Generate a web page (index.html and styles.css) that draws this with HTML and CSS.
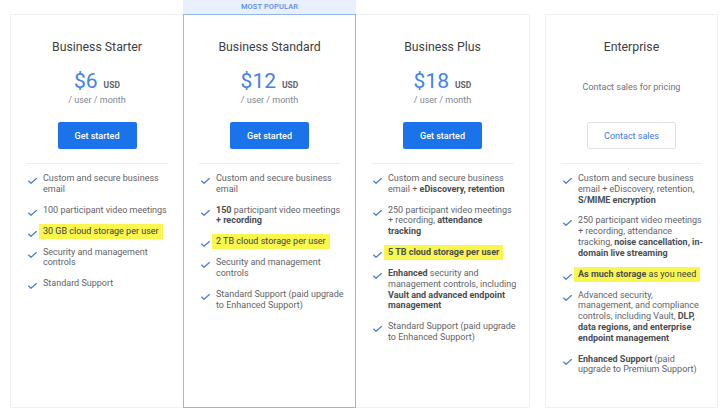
FILE: index.html
```html
<!DOCTYPE html>
<html lang="en">
<head>
<meta charset="utf-8">
<title>Google Workspace plans</title>
<link rel="stylesheet" href="styles.css">
</head>
<body>
<svg width="0" height="0" class="defs" aria-hidden="true">
  <symbol id="chk" viewBox="0 0 9 6"><polyline points="0.6,3.1 3,5.3 8.4,0.6" fill="none" stroke="#4a7fe0" stroke-width="1.3" stroke-linecap="round" stroke-linejoin="round"/></symbol>
</svg>
<main class="plans">
  <div class="group">
    <section class="card card-first">
      <h2 class="title">Business Starter</h2>
      <div class="pricing">
        <div class="price"><span class="amount">$6</span><span class="cur">USD</span></div>
        <div class="per">/ user / month</div>
      </div>
      <div class="cta"><a class="btn btn-primary">Get started</a></div>
      <hr class="rule">
      <ul class="features">
        <li><svg class="check"><use href="#chk"/></svg><span>Custom and secure business<br>email</span></li>
        <li><svg class="check"><use href="#chk"/></svg><span>100 participant video meetings</span></li>
        <li><svg class="check"><use href="#chk"/></svg><span><mark class="hl">30 GB cloud storage per user</mark></span></li>
        <li><svg class="check"><use href="#chk"/></svg><span>Security and management<br>controls</span></li>
        <li><svg class="check"><use href="#chk"/></svg><span>Standard Support</span></li>
      </ul>
    </section>
    <div class="featured">
      <div class="badge">MOST POPULAR</div>
      <section class="card card-featured">
        <h2 class="title">Business Standard</h2>
        <div class="pricing">
          <div class="price"><span class="amount">$12</span><span class="cur">USD</span></div>
          <div class="per">/ user / month</div>
        </div>
        <div class="cta"><a class="btn btn-primary">Get started</a></div>
        <hr class="rule">
        <ul class="features">
          <li><svg class="check"><use href="#chk"/></svg><span>Custom and secure business<br>email</span></li>
          <li><svg class="check"><use href="#chk"/></svg><span><b>150</b> participant video meetings<br><b>+ recording</b></span></li>
          <li><svg class="check"><use href="#chk"/></svg><span><mark class="hl">2 TB cloud storage per user</mark></span></li>
          <li><svg class="check"><use href="#chk"/></svg><span>Security and management<br>controls</span></li>
          <li><svg class="check"><use href="#chk"/></svg><span>Standard Support (paid upgrade<br>to Enhanced Support)</span></li>
        </ul>
      </section>
    </div>
    <section class="card card-last">
      <h2 class="title">Business Plus</h2>
      <div class="pricing">
        <div class="price"><span class="amount">$18</span><span class="cur">USD</span></div>
        <div class="per">/ user / month</div>
      </div>
      <div class="cta"><a class="btn btn-primary">Get started</a></div>
      <hr class="rule">
      <ul class="features">
        <li><svg class="check"><use href="#chk"/></svg><span>Custom and secure business<br>email + <b>eDiscovery, retention</b></span></li>
        <li><svg class="check"><use href="#chk"/></svg><span>250 participant video meetings<br>+ recording, <b>attendance<br>tracking</b></span></li>
        <li><svg class="check"><use href="#chk"/></svg><span><mark class="hl"><b>5 TB cloud storage per user</b></mark></span></li>
        <li><svg class="check"><use href="#chk"/></svg><span><b>Enhanced</b> security and<br>management controls, including<br><b>Vault and advanced endpoint<br>management</b></span></li>
        <li><svg class="check"><use href="#chk"/></svg><span>Standard Support (paid upgrade<br>to Enhanced Support)</span></li>
      </ul>
    </section>
  </div>
  <section class="card card-ent">
    <h2 class="title">Enterprise</h2>
    <div class="pricing">
      <div class="contact-note">Contact sales for pricing</div>
    </div>
    <div class="cta"><a class="btn btn-outline">Contact sales</a></div>
    <hr class="rule">
    <ul class="features">
      <li><svg class="check"><use href="#chk"/></svg><span>Custom and secure business<br>email + eDiscovery, retention,<br><b>S/MIME encryption</b></span></li>
      <li><svg class="check"><use href="#chk"/></svg><span>250 participant video meetings<br>+ recording, attendance<br>tracking, <b>noise cancellation, in-<br>domain live streaming</b></span></li>
      <li><svg class="check"><use href="#chk"/></svg><span><mark class="hl"><b>As much storage</b> as you need</mark></span></li>
      <li><svg class="check"><use href="#chk"/></svg><span>Advanced security,<br>management, and compliance<br>controls, including Vault, <b>DLP,<br>data regions, and enterprise<br>endpoint management</b></span></li>
      <li><svg class="check"><use href="#chk"/></svg><span><b>Enhanced Support</b> (paid<br>upgrade to Premium Support)</span></li>
    </ul>
  </section>
</main>
</body>
</html>
```
FILE: styles.css
```css
* { box-sizing: border-box; }
html, body { margin: 0; background: #fff; }
body { font-family: Roboto, "Noto Sans", Arial, sans-serif; color: #5f6368; width: 720px; height: 413px; overflow: hidden; }
.defs { position: absolute; }

.plans {
  display: flex;
  align-items: flex-end;
  gap: 15px;
  height: 413px;
  padding: 0 0 5px 10px;
}
.group { display: flex; align-items: flex-end; }

.card {
  width: 173px;
  height: 394px;
  background: #fff;
  border: 1px solid #eef0f2;
  padding-top: 24px;
}
.card-first { border-right: none; }
.card-last { border-left: none; width: 174px; }
.featured { display: flex; flex-direction: column; width: 173px; }
.badge {
  height: 14px;
  background: #e8f0fe;
  color: #5b8be6;
  font-size: 7.5px;
  font-weight: 500;
  line-height: 13px;
  text-align: center;
  letter-spacing: 0.1px;
}
.card-featured { border-color: #94b6ef; width: 173px; }

.title {
  margin: 0;
  font-size: 12.3px;
  font-weight: 400;
  line-height: 16px;
  color: #3c4043;
  text-align: center;
}
.pricing {
  margin-top: 13px;
  height: 38px;
  display: flex;
  flex-direction: column;
  justify-content: center;
  align-items: center;
}
.price { display: flex; align-items: baseline; height: 26px; line-height: 26px; }
.amount { font-size: 21px; color: #4282ee; }
.cur { font-size: 8.5px; font-weight: 700; color: #5f6368; margin-left: 6px; }
.per { font-size: 9px; line-height: 12px; color: #80868b; }
.contact-note { font-size: 9px; line-height: 12px; color: #6f7377; }

.cta { margin-top: 16px; display: flex; justify-content: center; }
.btn {
  display: flex;
  align-items: center;
  justify-content: center;
  height: 27px;
  border-radius: 2px;
  font-size: 9px;
  font-weight: 500;
}
.btn-primary { width: 79px; background: #1a73e8; color: #fff; }
.btn-outline { width: 89px; background: #fff; color: #3b78e7; border: 1px solid #dfe1e5; font-weight: 400; }

.rule { margin: 14px 15px 0; border: 0; border-top: 1px solid #eceef0; height: 0; }

.features {
  list-style: none;
  margin: 9px 0 0;
  padding: 0 10px 0 17px;
  display: flex;
  flex-direction: column;
  gap: 10px;
}
.features li {
  display: flex;
  gap: 6px;
  font-size: 9px;
  line-height: 10.8px;
  white-space: nowrap;
}
.check { width: 9px; height: 6px; flex: none; margin-top: 5px; }
.features b { font-weight: 700; color: #4a4d51; }
.hl {
  background: #f9f74e;
  color: #3c4043;
  padding: 2px 4px 3px 4px;
  margin-left: -4px;
}
```
